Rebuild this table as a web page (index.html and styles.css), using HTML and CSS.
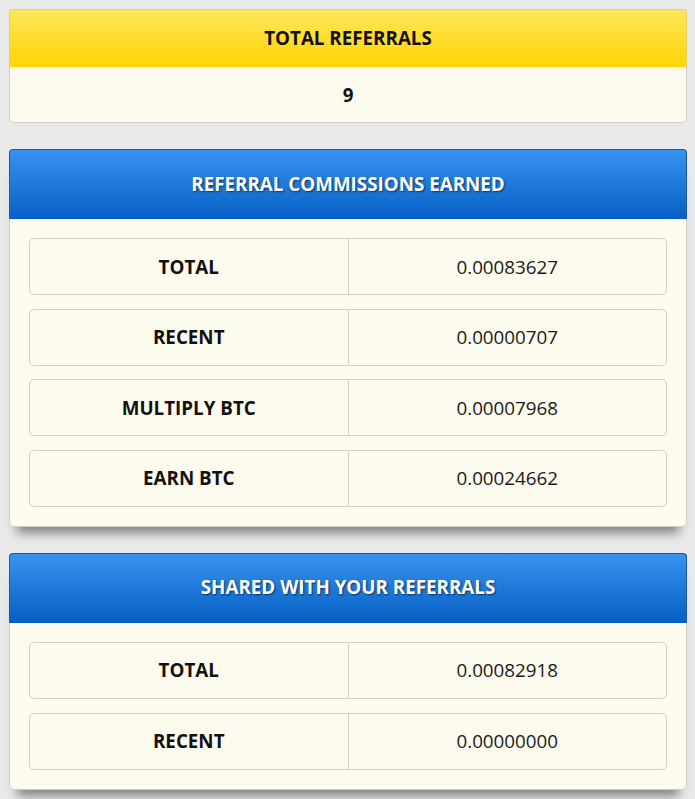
FILE: index.html
```html
<!DOCTYPE html>
<html>
<head>
<meta charset="utf-8">
<link rel="stylesheet" href="styles.css">
</head>
<body>
<div class="page">
  <section class="card card-flat">
    <div class="card-head head-yellow">TOTAL REFERRALS</div>
    <div class="card-total">9</div>
  </section>

  <section class="card card-raised">
    <div class="card-head head-blue">REFERRAL COMMISSIONS EARNED</div>
    <div class="card-body">
      <div class="row"><div class="cell label">TOTAL</div><div class="cell value">0.00083627</div></div>
      <div class="row"><div class="cell label">RECENT</div><div class="cell value">0.00000707</div></div>
      <div class="row"><div class="cell label">MULTIPLY BTC</div><div class="cell value">0.00007968</div></div>
      <div class="row"><div class="cell label">EARN BTC</div><div class="cell value">0.00024662</div></div>
    </div>
  </section>

  <section class="card card-raised">
    <div class="card-head head-blue">SHARED WITH YOUR REFERRALS</div>
    <div class="card-body">
      <div class="row"><div class="cell label">TOTAL</div><div class="cell value">0.00082918</div></div>
      <div class="row"><div class="cell label">RECENT</div><div class="cell value">0.00000000</div></div>
    </div>
  </section>
</div>
</body>
</html>
```

FILE: styles.css
```css
html, body {
  margin: 0;
  padding: 0;
}
body {
  background: #e9e9e9;
  font-family: "Open Sans", "Liberation Sans", sans-serif;
  color: #111;
}
.page {
  padding: 9px 8px 20px 9px;
  display: flex;
  flex-direction: column;
  gap: 26px;
}
.card {
  background: #fdfbed;
  border: 1px solid #cfcdc4;
  border-radius: 5px;
}
.card-raised {
  box-shadow: 0 14px 10px -8px rgba(0, 0, 0, 0.45);
}
.card-head {
  display: flex;
  align-items: center;
  justify-content: center;
  font-weight: 700;
  font-size: 18.8px;
  border-radius: 4px 4px 0 0;
  margin: -1px -1px 0 -1px;
}
.head-yellow {
  height: 58px;
  background: linear-gradient(#ffe65e, #ffd500);
  border: 1px solid #e8cf60;
  border-bottom: none;
  box-sizing: border-box;
  color: #111;
  padding-bottom: 2px;
}
.head-blue {
  height: 70px;
  box-sizing: border-box;
  background: linear-gradient(#3892ef, #0660c4);
  border: 1px solid #1b5ca8;
  border-bottom: none;
  color: #fff;
  text-shadow: 1px 1px 2px rgba(0, 0, 0, 0.6);
  padding-bottom: 2px;
}
.card-total {
  height: 55px;
  display: flex;
  align-items: center;
  justify-content: center;
  font-weight: 700;
  font-size: 18.8px;
}
.card-body {
  padding: 19px 19px 19px 19px;
  display: flex;
  flex-direction: column;
  gap: 13.67px;
}
.row {
  display: flex;
  height: 57px;
  box-sizing: border-box;
  border: 1px solid #d3d0c4;
  border-radius: 5px;
}
.cell {
  flex: 1 1 0;
  display: flex;
  align-items: center;
  justify-content: center;
  font-size: 18.8px;
}
.cell.label {
  font-weight: 700;
  border-right: 1px solid #d3d0c4;
}
.cell.value {
  font-weight: 400;
  color: #1a1a1a;
}
```
